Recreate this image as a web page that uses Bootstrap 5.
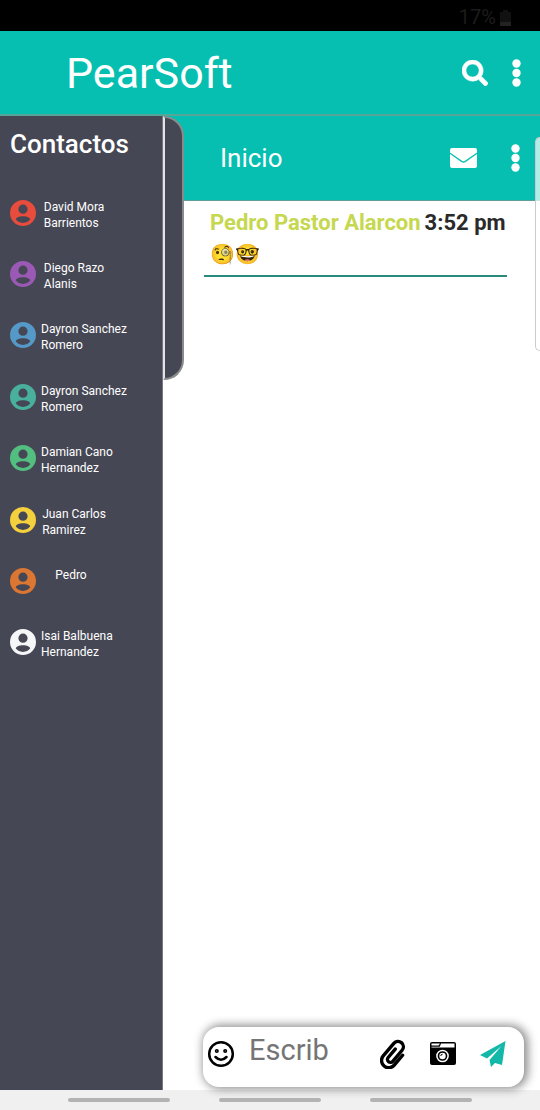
<!DOCTYPE html>
<html lang="es">
<head>
<meta charset="utf-8">
<meta name="viewport" content="width=device-width, initial-scale=1">
<title>PearSoft</title>
<link href="https://cdn.jsdelivr.net/npm/bootstrap@5.3.0/dist/css/bootstrap.min.css" rel="stylesheet">
<style>
  :root { --teal: #06bfb0; --slate: #464754; --edge: #8a8c8c; }
  body { font-family: Roboto, "Liberation Sans", sans-serif; background: #fff; color: #2a2a2a; }
  svg { display: block; }
  .status-strip { height: 31px; background: #000; color: #1c1c1c; font-size: 20px; line-height: 31px; padding-right: 29px; padding-top: 4px; }
  .top-header { height: 85px; background: var(--teal); border-bottom: 2px solid #55a699; padding: 0 19px 0 66px; }
  .app-title { font-size: 43px; line-height: 52px; color: #fff; }
  .icon-btn { background: none; border: 0; padding: 0; color: #fff; }
  .side-panel { width: 163px; background: var(--slate); color: #fff; border-right: 1px solid #77777f; }
  .side-title { font-size: 26px; font-weight: 500; line-height: 32px; padding: 12px 10px 0; }
  .contact-list { min-height: 491px; margin-top: 22px; }
  .contact-link { color: #fff; font-size: 12px; line-height: 16px; padding: 0 0 0 10px; gap: 5px; }
  .contact-name { min-width: 66px; height: 32px; margin-top: 4px; }
  .contact-name.single-line { min-width: 60px; }
  .drawer-tab { left: 163px; top: 0; width: 21px; height: 264px; background: var(--slate); border: 2px solid var(--edge); border-left: 2px solid #e4e4e6; border-radius: 0 20px 20px 0; }
  .edge-handle { right: 0; top: 21px; width: 5px; height: 214px; background: rgba(255,255,255,.7); border: 1px solid #c8cccc; border-right: 0; border-radius: 6px 0 0 6px; }
  .chat-pane { min-width: 0; }
  .chat-header { height: 85px; background: var(--teal); border-bottom: 1px solid #5f9d98; padding: 0 20px 0 57px; gap: 34px; }
  .chat-title { font-size: 26px; line-height: 32px; color: #fff; }
  .chat-message { margin: 6px 33px 0 41px; padding: 0 6px 6px; border-bottom: 2px solid #2a8b7d; font-size: 22px; line-height: 32px; }
  .sender-name { color: #c6d750; }
  .emoji-line { font-size: 20px; line-height: 30px; }
  .composer { margin: 0 16px 3px 40px; height: 60px; background: #fff; border-radius: 16px; box-shadow: 2px 0 10px 2px rgba(0,0,0,.45); padding: 0 18px 6px 4px; color: #000; }
  .composer-input { border: 0; outline: 0; padding: 0 0 6px; margin-left: 14px; font-size: 29px; height: 40px; width: 100px; background: none; }
  .composer-input::placeholder { color: #757575; opacity: 1; }
  .nav-strip { height: 20px; background: #f0f0f0; padding: 0 68px; }
  .nav-strip span { width: 102px; height: 4px; background: #b3b3b3; border-radius: 2px; }
</style>
</head>
<body>
<svg class="d-none">
  <symbol id="person" viewBox="0 0 26 26"><path fill-rule="evenodd" d="M13 0a13 13 0 1 0 0 26 13 13 0 0 0 0-26Zm0 4.600a4.600 4.600 0 1 1 0 9.200 4.600 4.600 0 0 1 0-9.200ZM13 16.300c4 0 7.200 1.500 7.200 3.300-1.600 2-4.200 3.300-7.200 3.300s-5.600-1.300-7.200-3.300c0-1.800 3.200-3.300 7.200-3.300Z" fill="currentColor"/></symbol>
  <symbol id="dots" viewBox="0 0 9 28"><g fill="currentColor"><circle cx="4.500" cy="4.500" r="4.200"/><circle cx="4.500" cy="14" r="4.200"/><circle cx="4.500" cy="23.500" r="4.200"/></g></symbol>
</svg>
<div class="d-flex flex-column min-vh-100">
  <div class="status-strip d-flex justify-content-end align-items-center gap-1">
    <span>17%</span>
    <svg width="11" height="16" viewBox="0 0 11 16"><path d="M3 0h5v2h3v14H0V2h3Z" fill="#111"/><path d="M0 12h11v4H0Z" fill="#222"/></svg>
  </div>
  <header class="top-header d-flex align-items-center">
    <h1 class="app-title fw-normal mb-0 me-auto">PearSoft</h1>
    <button class="icon-btn me-4" type="button" aria-label="Buscar"><svg width="26" height="26" viewBox="0 0 512 512"><path fill="currentColor" stroke="currentColor" stroke-width="10" d="M505 442.700L405.300 343c-4.500-4.500-10.600-7-17-7H372c27.600-35.300 44-79.700 44-128C416 93.100 322.900 0 208 0S0 93.100 0 208s93.100 208 208 208c48.300 0 92.700-16.400 128-44v16.300c0 6.400 2.500 12.500 7 17l99.700 99.700c9.400 9.400 24.600 9.400 33.900 0l28.300-28.300c9.400-9.400 9.400-24.600.1-34zM208 336c-70.700 0-128-57.200-128-128 0-70.700 57.200-128 128-128 70.700 0 128 57.200 128 128 0 70.700-57.200 128-128 128z"/></svg></button>
    <button class="icon-btn" type="button" aria-label="Menú"><svg width="9" height="28"><use href="#dots"/></svg></button>
  </header>
  <div class="d-flex flex-grow-1 position-relative">
    <aside class="side-panel flex-shrink-0">
      <h2 class="side-title mb-0">Contactos</h2>
      <ul class="contact-list list-unstyled d-flex flex-column mb-0">
        <li class="flex-fill d-flex align-items-center"><a href="#" class="contact-link d-flex text-decoration-none align-items-center"><svg width="26" height="26" color="#e74c3c"><use href="#person"/></svg><span class="contact-name d-flex justify-content-center"><span>David Mora<br>Barrientos</span></span></a></li>
        <li class="flex-fill d-flex align-items-center"><a href="#" class="contact-link d-flex text-decoration-none align-items-center"><svg width="26" height="26" color="#9b59b6"><use href="#person"/></svg><span class="contact-name d-flex justify-content-center"><span>Diego Razo<br>Alanis</span></span></a></li>
        <li class="flex-fill d-flex align-items-center"><a href="#" class="contact-link d-flex text-decoration-none align-items-center"><svg width="26" height="26" color="#5499c7"><use href="#person"/></svg><span class="contact-name d-flex justify-content-center"><span>Dayron Sanchez<br>Romero</span></span></a></li>
        <li class="flex-fill d-flex align-items-center"><a href="#" class="contact-link d-flex text-decoration-none align-items-center"><svg width="26" height="26" color="#48b09c"><use href="#person"/></svg><span class="contact-name d-flex justify-content-center"><span>Dayron Sanchez<br>Romero</span></span></a></li>
        <li class="flex-fill d-flex align-items-center"><a href="#" class="contact-link d-flex text-decoration-none align-items-center"><svg width="26" height="26" color="#52be80"><use href="#person"/></svg><span class="contact-name d-flex justify-content-center"><span>Damian Cano<br>Hernandez</span></span></a></li>
        <li class="flex-fill d-flex align-items-center"><a href="#" class="contact-link d-flex text-decoration-none align-items-center"><svg width="26" height="26" color="#f4d03f"><use href="#person"/></svg><span class="contact-name d-flex justify-content-center"><span>Juan Carlos<br>Ramirez</span></span></a></li>
        <li class="flex-fill d-flex align-items-center"><a href="#" class="contact-link d-flex text-decoration-none align-items-center"><svg width="26" height="26" color="#dc7633"><use href="#person"/></svg><span class="contact-name single-line d-flex justify-content-center"><span>Pedro</span></span></a></li>
        <li class="flex-fill d-flex align-items-center"><a href="#" class="contact-link d-flex text-decoration-none align-items-center"><svg width="26" height="26" color="#f4f6f7"><use href="#person"/></svg><span class="contact-name d-flex justify-content-center"><span>Isai Balbuena<br>Hernandez</span></span></a></li>
      </ul>
    </aside>
    <main class="chat-pane flex-grow-1 d-flex flex-column">
      <div class="chat-header d-flex align-items-center">
        <h2 class="chat-title fw-normal mb-0 me-auto">Inicio</h2>
        <button class="icon-btn" type="button" aria-label="Mensajes"><svg width="27" height="20" viewBox="0 0 27 20"><path fill="currentColor" d="M2 0h23q2 0 2 2v2.500l-12 8.300q-1.500 1-3 0L0 4.500V2q0-2 2-2ZM0 6l11.300 8q2.200 1.500 4.400 0L27 6v12q0 2-2 2H2q-2 0-2-2Z"/></svg></button>
        <button class="icon-btn" type="button" aria-label="Opciones"><svg width="9" height="28"><use href="#dots"/></svg></button>
      </div>
      <article class="chat-message">
        <div class="d-flex gap-1 fw-bold text-nowrap"><span class="sender-name">Pedro Pastor Alarcon</span><span>3:52 pm</span></div>
        <div class="emoji-line">🧐🤓</div>
      </article>
      <form class="composer mt-auto d-flex align-items-center">
        <button class="icon-btn text-black" type="button" aria-label="Emojis"><svg width="28" height="28" viewBox="0 0 28 28" fill="none" stroke="currentColor" stroke-width="2.500" stroke-linecap="round"><circle cx="14" cy="14" r="11.800"/><path d="M8.500 17q5.500 5.500 11 0"/><circle cx="9.800" cy="11" r=".8"/><circle cx="18.200" cy="11" r=".8"/></svg></button>
        <input class="composer-input me-auto" type="text" placeholder="Escrib" aria-label="Mensaje">
        <button class="icon-btn text-black" type="button" aria-label="Adjuntar"><svg width="26" height="30" viewBox="0 0 26 30"><g transform="translate(0 1) rotate(40 13 15)" fill="none" stroke="currentColor" stroke-width="3.400" stroke-linecap="round"><path d="M20.500 9v13a7.200 7.200 0 0 1-14.400 0V5.500a5.400 5.400 0 0 1 10.800 0V20a3 3 0 0 1-6 0V9"/></g></svg></button>
        <button class="icon-btn text-black ms-4" type="button" aria-label="Cámara"><svg width="26" height="24" viewBox="0 0 26 24"><rect width="26" height="23" rx="2" fill="#000"/><path d="M1.500 1.500H10L8.500 3.500h-7ZM11 1.500h13.500V5.500H1.500V4.700h8.300Z" fill="#fff"/><circle cx="12.500" cy="14" r="5.600" fill="none" stroke="#fff" stroke-width="1.500"/><circle cx="12.500" cy="14" r="3.200" fill="#fff"/><path d="M10.800 14a1.800 1.800 0 0 1 1.800-1.800" fill="none" stroke="#000"/></svg></button>
        <button class="icon-btn ms-4" type="submit" aria-label="Enviar"><svg width="26" height="26" viewBox="0 0 26 26"><path fill="#14b8a9" d="M25.500 0 22 24 15 22 11 26 9.500 19 21.500 5 7 17.500 0 14Z"/></svg></button>
      </form>
    </main>
    <div class="drawer-tab position-absolute"></div>
    <div class="edge-handle position-absolute"></div>
  </div>
  <footer class="nav-strip d-flex align-items-center justify-content-between"><span></span><span></span><span></span></footer>
</div>
<script src="https://cdn.jsdelivr.net/npm/bootstrap@5.3.0/dist/js/bootstrap.bundle.min.js"></script>
</body>
</html>
